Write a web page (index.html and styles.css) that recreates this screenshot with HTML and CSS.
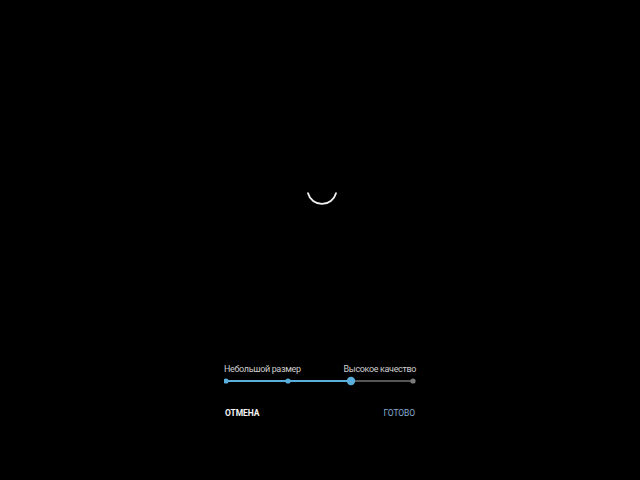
FILE: index.html
```html
<!DOCTYPE html>
<html lang="ru">
<head>
<meta charset="utf-8">
<title>Качество</title>
<link rel="stylesheet" href="styles.css">
</head>
<body>
<div class="screen">
  <div class="preview">
    <svg class="spinner" width="36" height="36" viewBox="0 0 36 36">
      <path d="M32 22.2 A14.5 14.5 0 0 1 4 22.2" fill="none" stroke="#f2f2f2" stroke-width="1.8" stroke-linecap="round"/>
    </svg>
  </div>
  <div class="panel">
    <div class="labels">
      <span>Небольшой размер</span>
      <span>Высокое качество</span>
    </div>
    <svg class="slider" width="192" height="12" viewBox="0 0 192 12">
      <line x1="2" y1="6" x2="127" y2="6" stroke="#5aaedc" stroke-width="2"/>
      <line x1="127" y1="6" x2="189" y2="6" stroke="#555" stroke-width="2"/>
      <circle cx="2" cy="6" r="2.6" fill="#5aaedc"/>
      <circle cx="64" cy="6" r="2.6" fill="#5aaedc"/>
      <circle cx="189" cy="6" r="2.6" fill="#7a7a7a"/>
      <circle cx="127" cy="6" r="4.2" fill="#5aaedc"/>
    </svg>
    <div class="buttons">
      <span class="btn cancel">ОТМЕНА</span>
      <span class="btn done">ГОТОВО</span>
    </div>
  </div>
</div>
</body>
</html>
```
FILE: styles.css
```css
html, body {
  margin: 0;
  padding: 0;
  background: #000;
}
body {
  font-family: Roboto, "Noto Sans", sans-serif;
  width: 640px;
  height: 480px;
  overflow: hidden;
}
.screen {
  display: flex;
  flex-direction: column;
  align-items: center;
  height: 480px;
}
.preview {
  padding-top: 171px;
  padding-left: 3px;
  height: 36px;
}
.spinner {
  display: block;
}
.panel {
  width: 192px;
  margin-top: 156px;
  display: flex;
  flex-direction: column;
}
.labels {
  display: flex;
  justify-content: space-between;
  font-size: 9px;
  letter-spacing: -0.35px;
  line-height: 12px;
  color: #cfcfcf;
}
.slider {
  display: block;
  margin-top: 0;
}
.buttons {
  display: flex;
  justify-content: space-between;
  margin-top: 20px;
  padding: 0 1px;
  font-size: 8.5px;
  line-height: 12px;
}
.cancel {
  color: #f4f4f4;
  font-weight: bold;
  letter-spacing: -0.1px;
}
.done {
  color: #86acd2;
  font-weight: normal;
  letter-spacing: -0.1px;
}
```
